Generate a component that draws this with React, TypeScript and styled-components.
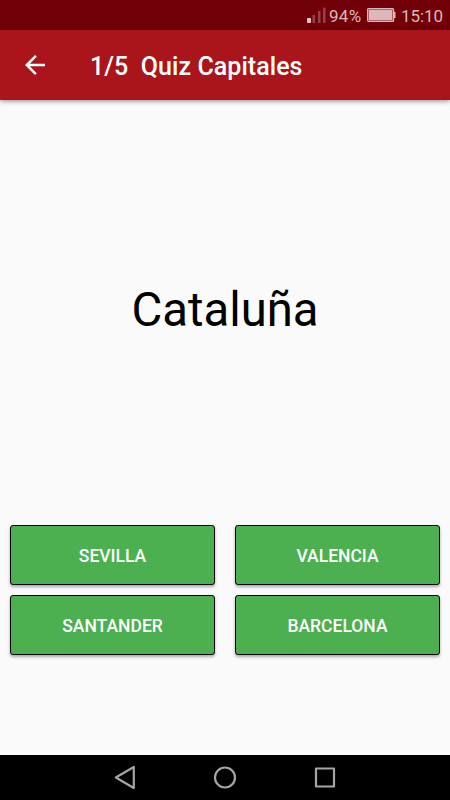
import React from 'react';
import styled, { createGlobalStyle } from 'styled-components';

const GlobalStyle = createGlobalStyle`
  * { box-sizing: border-box; }
  body { margin: 0; background: #fafafa; font-family: Roboto, sans-serif; }
`;

const Screen = styled.div`
  display: flex;
  flex-direction: column;
  width: 450px;
  height: 800px;
  background: #fafafa;
  overflow: hidden;
`;

const StatusBar = styled.header`
  display: flex;
  align-items: center;
  justify-content: flex-end;
  height: 30px;
  padding-right: 8px;
  background: #720008;
  color: #dcb8ba;
  font-size: 17px;
  line-height: 30px;
  white-space: nowrap;
  svg { display: block; flex: none; }
`;

const Percent = styled.span`
  width: 34px;
  margin: 2px 4px 0 3px;
  letter-spacing: 0.3px;
`;

const Clock = styled.span`
  width: 41px;
  margin: 2px 0 0 5px;
  letter-spacing: -0.1px;
`;

const Toolbar = styled.div`
  display: flex;
  align-items: center;
  flex: none;
  height: 70px;
  padding-left: 20px;
  background: #a9151b;
  box-shadow: 0 1px 5px rgba(0, 0, 0, 0.45);
`;

const BackButton = styled.button`
  display: flex;
  width: 30px;
  height: 30px;
  padding: 0;
  border: 0;
  background: none;
`;

const Title = styled.h1`
  margin: 3px 0 0 40px;
  color: #fff;
  font-size: 25px;
  font-weight: 500;
  line-height: 32px;
  letter-spacing: 0.05px;
  white-space: pre;
`;

const Question = styled.main`
  display: flex;
  align-items: center;
  justify-content: center;
  flex: 1;
  padding-bottom: 6px;
  color: #000;
  font-size: 47.3px;
`;

const Answers = styled.div`
  display: grid;
  grid-template-columns: 205px 205px;
  grid-auto-rows: 60px;
  gap: 10px 20px;
  padding: 0 10px 100px;
`;

const Answer = styled.button`
  padding: 2px 0 0;
  border: 1px solid #000;
  border-radius: 3px;
  background: #4caf50;
  box-shadow: 0 2px 3px rgba(0, 0, 0, 0.32);
  color: #fff;
  font: 500 17.5px Roboto, sans-serif;
`;

const NavBar = styled.nav`
  display: flex;
  align-items: center;
  justify-content: center;
  gap: 60px;
  height: 45px;
  background: #000;
`;

const NavIcon = styled.svg`
  width: 40px;
  height: 45px;
  fill: none;
  stroke: #a5a5a5;
  stroke-width: 2.2;
  stroke-linejoin: round;
`;

const options = ['Sevilla', 'Valencia', 'Santander', 'Barcelona'];

export default function App() {
  return (
    <>
      <GlobalStyle />
      <Screen>
        <StatusBar>
          <svg width="20" height="30" viewBox="0 0 20 30">
            <rect x="1" y="18" width="4" height="5" rx="0.8" fill="#e2c4c6" />
            <path d="M6.5 15h2.5v8H6.5zM12 11h2.5v12H12zM17 7.5h2.5V23H17z" fill="#964047" />
          </svg>
          <Percent>94%</Percent>
          <svg width="29" height="30" viewBox="0 0 29 30">
            <rect x="0.6" y="8.6" width="26" height="12.8" rx="1" fill="#9c4950" stroke="#dcb8ba" strokeWidth="1.2" />
            <rect x="2" y="10" width="23.2" height="10" fill="#dcb8ba" />
            <path d="M27 12h1.5v6H27z" fill="#dcb8ba" />
          </svg>
          <Clock>15:10</Clock>
        </StatusBar>
        <Toolbar>
          <BackButton aria-label="Atrás">
            <svg width="30" height="30" viewBox="0 0 24 24" fill="#fff">
              <path d="M20 11H7.83l5.59-5.59L12 4l-8 8 8 8 1.41-1.41L7.83 13H20v-2z" />
            </svg>
          </BackButton>
          <Title>{'1/5  Quiz Capitales'}</Title>
        </Toolbar>
        <Question>Cataluña</Question>
        <Answers>
          {options.map((name) => (
            <Answer key={name}>{name.toUpperCase()}</Answer>
          ))}
        </Answers>
        <NavBar>
          <NavIcon viewBox="0 0 40 45">
            <path d="M28.8 12v21L10.8 22.5z" />
          </NavIcon>
          <NavIcon viewBox="0 0 40 45">
            <circle cx="20" cy="22.5" r="10" />
          </NavIcon>
          <NavIcon viewBox="0 0 40 45">
            <rect x="11" y="13.5" width="18" height="18" />
          </NavIcon>
        </NavBar>
      </Screen>
    </>
  );
}
